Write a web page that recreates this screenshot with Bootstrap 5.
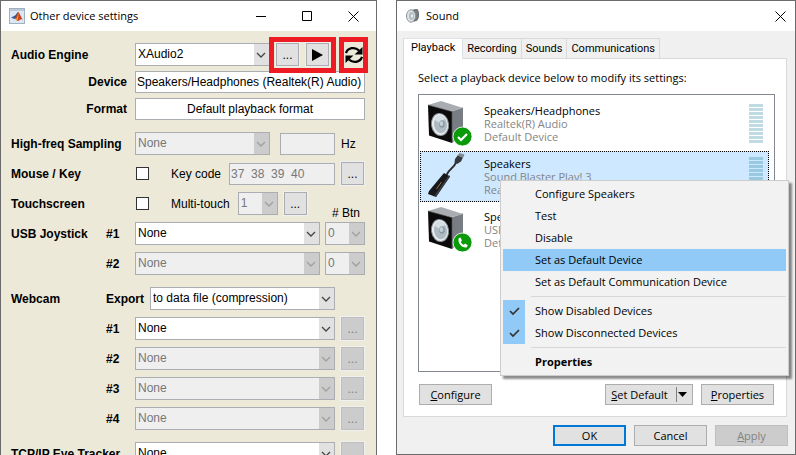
<!DOCTYPE html>
<html lang="en">
<head>
<meta charset="utf-8">
<meta name="viewport" content="width=device-width, initial-scale=1">
<title>Device settings</title>
<link href="https://cdn.jsdelivr.net/npm/bootstrap@5.3.0/dist/css/bootstrap.min.css" rel="stylesheet">
<style>
  body { background: #fff; color: #000; font: 12px/14px "Open Sans", "Noto Sans", sans-serif; }
  .desktop { display: grid; grid-template-columns: minmax(0, 377fr) minmax(0, 400fr); gap: 19px; }
  .win { border: 1px solid #6b6b6b; min-height: 0; }
  .win-bar { height: 30px; background: #fff; flex: none; }
  .win-title { font-size: 11px; font-weight: 400; line-height: 16px; margin: 0 0 0 5px; }
  .cap { width: 46px; height: 30px; border: 0; background: none; padding: 0; display: grid; place-items: center; }
  .cap-sm { width: 30px; }
  button svg { display: block; }

  /* settings form */
  .settings { background: #ece9d8; font-family: "Liberation Sans", Arial, sans-serif; font-size: 12px; padding: 12px 11px 0 10px; flex: 1 0 auto; }
  .settings-win { border-bottom: 0; overflow: hidden; }
  .line { display: flex; align-items: center; height: 23px; margin-bottom: 7px; }
  .line-tight { margin-bottom: 4px; }
  .line-end { margin-bottom: 12px; }
  .head { flex: none; width: 95px; font-weight: 700; white-space: nowrap; }
  .sub { flex: none; width: 29px; font-weight: 700; white-space: nowrap; }
  .sub-wide { width: 44px; }
  .head-full { width: 124px; }
  .head-end { text-align: right; padding-right: 8px; }
  .pick.form-select, .field.form-control { height: 23px; min-height: 0; border: 1px solid #abadb3; border-radius: 0; font-size: 12px; line-height: 15px; color: #000; padding: 0 16px 0 2px; min-width: 0; }
  .field.form-control { height: 22px; padding: 0 1px; }
  .pick.form-select { background-color: #fff; background-repeat: no-repeat; background-size: 15px 21px; background-position: right center;
    background-image: url("data:image/svg+xml,%3Csvg xmlns='http://www.w3.org/2000/svg' viewBox='0 0 15 21'%3E%3Crect width='15' height='21' fill='%23e1e1e1'/%3E%3Cpath d='M3 9l4 4 4-4' fill='none' stroke='%23444' stroke-width='1.3'/%3E%3C/svg%3E"); }
  .pick.form-select:disabled { background-color: #efefef; color: #777; opacity: 1;
    background-image: url("data:image/svg+xml,%3Csvg xmlns='http://www.w3.org/2000/svg' viewBox='0 0 15 21'%3E%3Crect width='15' height='21' fill='%23ccc'/%3E%3Cpath d='M3 9l4 4 4-4' fill='none' stroke='%23a0a0a0' stroke-width='1.3'/%3E%3C/svg%3E"); }
  .field.form-control:disabled { background: #efefef; color: #777; }
  .w-btn { flex: 0 0 40px; width: 40px; }
  .btn-count { margin-left: 5px; }
  .w-hz { flex: 0 0 55px; margin-left: 10px; }
  .unit { flex: 0 0 30px; padding-left: 6px; }
  .sel-export { margin-right: 30px; }
  .tick.form-check-input { width: 13px; height: 13px; border: 1px solid #333; border-radius: 0; margin: 0 22px 0 1px; flex: none; background-color: #fff; }
  .sq { flex: none; width: 23px; height: 23px; border: 1px solid #abadb3; border-radius: 0; background: #e1e1e1; padding: 0; font-size: 12px; line-height: 14px; display: grid; place-items: center; color: #000; box-shadow: 0 0 0 1px #f0f0f0; }
  .sq:disabled { background: #ccc; border-color: #bfbfbf; color: #808080; }
  .sq-gap { margin: 0 1px 0 6px; }
  .callout-red { flex: none; display: flex; align-items: center; height: 36px; border: 5px solid #ed1c24; position: relative; z-index: 1; background: #ece9d8; }
  .callout-pair { padding: 0 2px; gap: 7px; margin-left: -1px; margin-right: 3px; }
  .callout-one { margin-right: -3px; }
  .spin { width: 19px; height: 25px; border: 0; padding: 0; background: #ece9d8; display: grid; place-items: center; }
  .btn-head { margin: 0 5px -5px auto; align-self: flex-end; }

  /* sound dialog */
  .sound { background: #f0f0f0; padding: 7px 7px 8px 6px; font-size: 11px; flex: 1 1 auto; min-height: 0; }
  .tabs.nav-tabs { border: 0; align-items: flex-end; flex: none; font-family: Roboto, "Open Sans", sans-serif; }
  .tabs .nav-link { border: 1px solid #d9d9d9; border-left: 0; border-bottom: 0; border-radius: 0; background: #f0f0f0; color: #000; padding: 2px 4px 1px; line-height: 16px; margin: 0; }
  .tabs .nav-link.active { background: #fff; color: #000; border-left: 1px solid #d9d9d9; padding: 1px 7px 3px; margin-bottom: -1px; position: relative; }
  .pane { background: #fff; border: 1px solid #d9d9d9; padding: 11px 11px 11px 14px; margin-right: 1px; }
  .pane-text { line-height: 16px; margin: 0 0 8px; }
  .pane-buttons { margin: 12px 1px 0; }
  .devices { border: 1px solid #828790; padding: 3px 5px 3px 1px; position: relative; }
  .device { height: 51px; margin-bottom: 2px; padding: 0 5px 0 6px; border: 1px solid transparent; display: flex; align-items: center; white-space: nowrap; overflow: hidden; }
  .device-on { background: #cde8ff; border: 1px dotted #000; }
  .device-text { margin-left: 11px; line-height: 13px; color: #858585; }
  .device-name { color: #000; }
  .meter-bars { width: 14px; height: 39px; margin-left: auto; background: repeating-linear-gradient(#c0dbe3 0 3px, transparent 3px 4px); }
  .device-on .meter-bars { background: repeating-linear-gradient(#98c9e0 0 3px, transparent 3px 4px); }
  .push { width: 73px; height: 21px; border: 1px solid #adadad; border-radius: 0; background: #e1e1e1; padding: 0; font-size: 11px; line-height: 16px; color: #000; }
  .push-ok { border: 2px solid #0078d7; }
  .push:disabled { background: #ccc; border-color: #bfbfbf; color: #838383; opacity: 1; }
  .push-split { width: 88px; }
  .split-bar { width: 1px; height: 15px; background: #808080; margin: 0 1px 0 8px; }
  .foot { margin-top: 8px; gap: 8px; }

  .popup.dropdown-menu { display: block; left: 81px; right: -15px; top: 85px; min-width: 0; border: 1px solid #ccc; border-radius: 0; background: #f2f2f2; padding: 2px; font-size: 11px; color: #000; box-shadow: 3px 3px 2px rgba(0,0,0,.45); }
  .popup .dropdown-item { height: 22px; line-height: 20px; padding: 0 0 0 32px; color: #000; display: flex; align-items: center; }
  .popup .dropdown-item.active { background: #91c9f7; }
  .popup .dropdown-divider { margin: 3px 0 3px 28px; border-top: 1px solid #d7d7d7; opacity: 1; }
  .checkcell { width: 22px; height: 22px; margin-left: -32px; margin-right: 10px; background: #91c9f7; display: grid; place-items: center; }
</style>
</head>
<body>
<svg class="d-none" aria-hidden="true">
  <symbol id="speaker" viewBox="0 0 46 48">
    <path d="M1 5L14 1l22 7-11 3z" fill="#a9adb1"/>
    <path d="M25 11l11-3.500v25L25 43z" fill="#787d84"/>
    <path d="M25 11l11-3.500" stroke="#c3c6ca" stroke-width=".6"/>
    <path d="M1 5l24 6.500V43L2 35.500z" fill="#0b0b0b"/>
    <path d="M1 5l24 6.500V43" fill="none" stroke="#555" stroke-width=".7"/>
    <ellipse cx="13" cy="24.500" rx="9" ry="11.500" fill="#8f979c" transform="rotate(-8 13 24.500)"/>
    <ellipse cx="13" cy="24.500" rx="8" ry="10.500" fill="#e8edf0" transform="rotate(-8 13 24.500)"/>
    <ellipse cx="13.500" cy="24.500" rx="6.500" ry="8.800" fill="#aebbc3" transform="rotate(-8 13 24.500)"/>
    <path d="M8 20c2-5 7-6 10-2l-4 6z" fill="#d6dfe4"/>
    <ellipse cx="15" cy="24" rx="2.800" ry="3.800" fill="#8998a2"/>
    <ellipse cx="14.500" cy="23.500" rx="1.800" ry="2.600" fill="#c4d0d7"/>
  </symbol>
</svg>

<main class="desktop vh-100 overflow-hidden">
  <section class="win settings-win d-flex flex-column">
    <header class="win-bar d-flex align-items-center">
      <svg class="ms-2" width="16" height="16" viewBox="0 0 16 16" aria-hidden="true">
        <rect x=".5" y=".5" width="15" height="15" fill="#dbe7f2" stroke="#9fb0c0"/>
        <path d="M1 1h14v2H1z" fill="#b9c9d8"/>
        <path d="M2 9.500l3-1.500 1.500 1-1.500 2z" fill="#2f6db5"/>
        <path d="M5 8c1.500 0 2.500-3 4-4L7.500 9.500 5 11z" fill="#3f4f8c"/>
        <path d="M9 4c1.500 0 2.500 5 5 7.500-1.500-.5-2.500-.5-3.300.5-.8.800-1.500 1-2.400 1-.5-1-1.300-1.700-2.300-2C7.800 9.500 7.800 5 9 4z" fill="#c8431c"/>
        <path d="M9 4c.3 2.500-.5 5.500-2.300 7.500L8.300 13c1-2 1.700-6 .7-9z" fill="#f39a2b"/>
      </svg>
      <h1 class="win-title">Other device settings</h1>
      <div class="d-flex ms-auto">
        <button class="cap" type="button" aria-label="Minimize"><svg width="11" height="11"><path d="M0 5.500h10" stroke="#000"/></svg></button>
        <button class="cap" type="button" aria-label="Maximize"><svg width="10" height="10"><path d="M.5.5h9v9h-9z" fill="none" stroke="#000"/></svg></button>
        <button class="cap" type="button" aria-label="Close"><svg width="11" height="11"><path d="M.5.5l10 10m0-10l-10 10" stroke="#000"/></svg></button>
      </div>
    </header>

    <form class="settings">
      <div class="line line-tight">
        <label class="head head-full" for="engine">Audio Engine</label>
        <select class="form-select pick flex-fill w-auto" id="engine"><option>XAudio2</option></select>
        <div class="callout-red callout-pair">
          <button class="sq" type="button" aria-label="Engine options">...</button>
          <button class="sq" type="button" aria-label="Play"><svg width="11" height="12"><path d="M0 0l11 6-11 6z"/></svg></button>
        </div>
        <div class="callout-red callout-one">
          <button class="spin" type="button" aria-label="Refresh">
            <svg width="18" height="18" viewBox="0 0 18 18"><path d="M1 7C3 1.500 10 .5 14 4.500M17 11C15 16.500 8 17.500 4 13.500" fill="none" stroke="#000" stroke-width="2.200"/><path d="M17.500 1v7.500H9.500zM.5 17V9.500h8z"/></svg>
          </button>
        </div>
      </div>
      <div class="line line-tight">
        <label class="head head-full head-end" for="dev">Device</label>
        <input class="form-control field" id="dev" value="Speakers/Headphones (Realtek(R) Audio)">
      </div>
      <div class="line line-end">
        <label class="head head-full head-end" for="fmt">Format</label>
        <input class="form-control field text-center" id="fmt" value="Default playback format">
      </div>

      <div class="line">
        <label class="head head-full" for="freq">High-freq Sampling</label>
        <select class="form-select pick flex-fill w-auto" id="freq" disabled><option>None</option></select>
        <input class="form-control field w-hz" id="hz" disabled>
        <label class="unit" for="hz">Hz</label>
      </div>
      <div class="line">
        <label class="head head-full" for="mouse">Mouse / Key</label>
        <input class="form-check-input tick" type="checkbox" id="mouse">
        <label class="text-nowrap pe-2" for="keys">Key code</label>
        <input class="form-control field" id="keys" value="37  38  39  40" disabled>
        <button class="sq sq-gap" type="button" aria-label="Key options">...</button>
      </div>
      <div class="line">
        <label class="head head-full" for="touch">Touchscreen</label>
        <input class="form-check-input tick" type="checkbox" id="touch">
        <label class="text-nowrap pe-2" for="multi">Multi-touch</label>
        <select class="form-select pick w-btn" id="multi" disabled><option>1</option></select>
        <button class="sq sq-gap" type="button" aria-label="Touch options">...</button>
        <span class="btn-head"># Btn</span>
      </div>
      <div class="line">
        <span class="head">USB Joystick</span><label class="sub" for="joy1">#1</label>
        <select class="form-select pick flex-fill w-auto" id="joy1"><option>None</option></select>
        <select class="form-select pick w-btn btn-count" aria-label="Joystick 1 buttons" disabled><option>0</option></select>
      </div>
      <div class="line line-end">
        <span class="head"></span><label class="sub" for="joy2">#2</label>
        <select class="form-select pick flex-fill w-auto" id="joy2" disabled><option>None</option></select>
        <select class="form-select pick w-btn btn-count" aria-label="Joystick 2 buttons" disabled><option>0</option></select>
      </div>

      <div class="line">
        <span class="head">Webcam</span><label class="sub sub-wide" for="exp">Export</label>
        <select class="form-select pick flex-fill w-auto sel-export" id="exp"><option>to data file (compression)</option></select>
      </div>
      <div class="line">
        <span class="head"></span><label class="sub" for="cam1">#1</label>
        <select class="form-select pick" id="cam1"><option>None</option></select>
        <button class="sq sq-gap" type="button" aria-label="Webcam 1 options" disabled>...</button>
      </div>
      <div class="line">
        <span class="head"></span><label class="sub" for="cam2">#2</label>
        <select class="form-select pick" id="cam2" disabled><option>None</option></select>
        <button class="sq sq-gap" type="button" aria-label="Webcam 2 options" disabled>...</button>
      </div>
      <div class="line">
        <span class="head"></span><label class="sub" for="cam3">#3</label>
        <select class="form-select pick" id="cam3" disabled><option>None</option></select>
        <button class="sq sq-gap" type="button" aria-label="Webcam 3 options" disabled>...</button>
      </div>
      <div class="line line-end">
        <span class="head"></span><label class="sub" for="cam4">#4</label>
        <select class="form-select pick" id="cam4" disabled><option>None</option></select>
        <button class="sq sq-gap" type="button" aria-label="Webcam 4 options" disabled>...</button>
      </div>
      <div class="line">
        <label class="head head-full" for="eye">TCP/IP Eye Tracker</label>
        <select class="form-select pick" id="eye"><option>None</option></select>
        <button class="sq sq-gap" type="button" aria-label="Eye tracker options" disabled></button>
      </div>
    </form>
  </section>

  <section class="win d-flex flex-column">
    <header class="win-bar d-flex align-items-center">
      <svg class="ms-2" width="16" height="16" viewBox="0 0 16 16" aria-hidden="true">
        <path d="M7 2l5-1c2.500 1 3 11-1 12l-4 1z" fill="#4b4f52"/>
        <path d="M9 1.500l3-.5c2.500 2 2 10-1 12l-1-1z" fill="#777c80"/>
        <ellipse cx="6" cy="8" rx="4.500" ry="6.200" fill="#dfe4e7" stroke="#8d9499"/>
        <ellipse cx="6.500" cy="8" rx="2.600" ry="4" fill="#b3bdc4"/>
        <ellipse cx="7" cy="8" rx="1.200" ry="1.800" fill="#e9eef1"/>
      </svg>
      <h2 class="win-title">Sound</h2>
      <button class="cap cap-sm ms-auto" type="button" aria-label="Close"><svg width="11" height="11"><path d="M.5.5l10 10m0-10l-10 10" stroke="#000"/></svg></button>
    </header>

    <div class="sound d-flex flex-column">
      <nav class="nav nav-tabs tabs flex-nowrap">
        <a class="nav-link active" href="#playback">Playback</a>
        <a class="nav-link" href="#recording">Recording</a>
        <a class="nav-link" href="#sounds">Sounds</a>
        <a class="nav-link" href="#communications">Communications</a>
      </nav>
      <div class="pane flex-fill d-flex flex-column" id="playback">
        <p class="pane-text">Select a playback device below to modify its settings:</p>
        <div class="devices flex-fill">
          <div class="device">
            <svg class="flex-shrink-0" width="46" height="48" viewBox="0 0 46 48" aria-hidden="true"><use href="#speaker"/>
              <circle cx="35.500" cy="36.500" r="9.500" fill="#0a9a0a" stroke="#fff" stroke-width=".8"/><path d="M31 37l3 3 6-6" fill="none" stroke="#fff" stroke-width="2.200"/></svg>
            <div class="device-text"><div class="device-name">Speakers/Headphones</div><div>Realtek(R) Audio</div><div>Default Device</div></div>
            <div class="meter-bars"></div>
          </div>
          <div class="device device-on">
            <svg class="flex-shrink-0" width="46" height="48" viewBox="0 0 46 48" aria-hidden="true">
              <path d="M19.500 22c2-4 2-4 4.500-6s4-4 6-8" fill="none" stroke="#2a2a2a" stroke-width="1.800"/>
              <path d="M28 6l3-4 5 2.500-2 4-4 2.500-2.500-1.500z" fill="#33383d"/><path d="M30.500 2.500l2-2.500 5 1.500-1.500 3.500z" fill="#7f8a92"/>
              <path d="M17 20l6 3.500L9 44 1 41l1-3z" fill="#17181b"/><path d="M23 23.500L9 44l-1.500-1.500L22 22z" fill="#3b3d42"/>
              <path d="M9.500 36l5-7" stroke="#9c7c3c" stroke-width="1"/>
            </svg>
            <div class="device-text"><div class="device-name">Speakers</div><div>Sound Blaster Play! 3</div><div>Ready</div></div>
            <div class="meter-bars"></div>
          </div>
          <div class="device">
            <svg class="flex-shrink-0" width="46" height="48" viewBox="0 0 46 48" aria-hidden="true"><use href="#speaker"/>
              <circle cx="35.500" cy="36.500" r="9.500" fill="#0a9a0a" stroke="#fff" stroke-width=".8"/><path d="M31.500 32.500l2-1 1.500 3-1.200 1.300c.5 1.500 1.500 2.500 3 3l1.400-1.200 2.600 1.700-1 2c-4 1.500-9-3.500-8.300-8.800z" fill="#fff"/></svg>
            <div class="device-text"><div class="device-name">Speakers</div><div>USB Audio</div><div>Default</div></div>
          </div>

          <div class="dropdown-menu popup">
            <a class="dropdown-item" href="#configure">Configure Speakers</a>
            <a class="dropdown-item" href="#test">Test</a>
            <a class="dropdown-item" href="#disable">Disable</a>
            <a class="dropdown-item active" href="#default">Set as Default Device</a>
            <a class="dropdown-item" href="#comm">Set as Default Communication Device</a>
            <hr class="dropdown-divider">
            <a class="dropdown-item" href="#disabled"><span class="checkcell"><svg width="11" height="9"><path d="M1 4l3 3 6-6" fill="none" stroke="#333" stroke-width="1.700"/></svg></span>Show Disabled Devices</a>
            <a class="dropdown-item" href="#disconnected"><span class="checkcell"><svg width="11" height="9"><path d="M1 4l3 3 6-6" fill="none" stroke="#333" stroke-width="1.700"/></svg></span>Show Disconnected Devices</a>
            <hr class="dropdown-divider">
            <a class="dropdown-item fw-bold" href="#properties">Properties</a>
          </div>
        </div>
        <div class="d-flex gap-2 pane-buttons">
          <button class="push me-auto" type="button"><u>C</u>onfigure</button>
          <button class="push push-split d-flex align-items-center justify-content-center" type="button"><span><u>S</u>et Default</span><span class="split-bar"></span><svg width="9" height="5"><path d="M0 0h9L4.500 5z"/></svg></button>
          <button class="push" type="button"><u>P</u>roperties</button>
        </div>
      </div>
      <footer class="foot d-flex justify-content-end">
        <button class="push push-ok" type="button">OK</button>
        <button class="push" type="button">Cancel</button>
        <button class="push" type="button" disabled><u>A</u>pply</button>
      </footer>
    </div>
  </section>
</main>
<script src="https://cdn.jsdelivr.net/npm/bootstrap@5.3.0/dist/js/bootstrap.bundle.min.js"></script>
</body>
</html>
